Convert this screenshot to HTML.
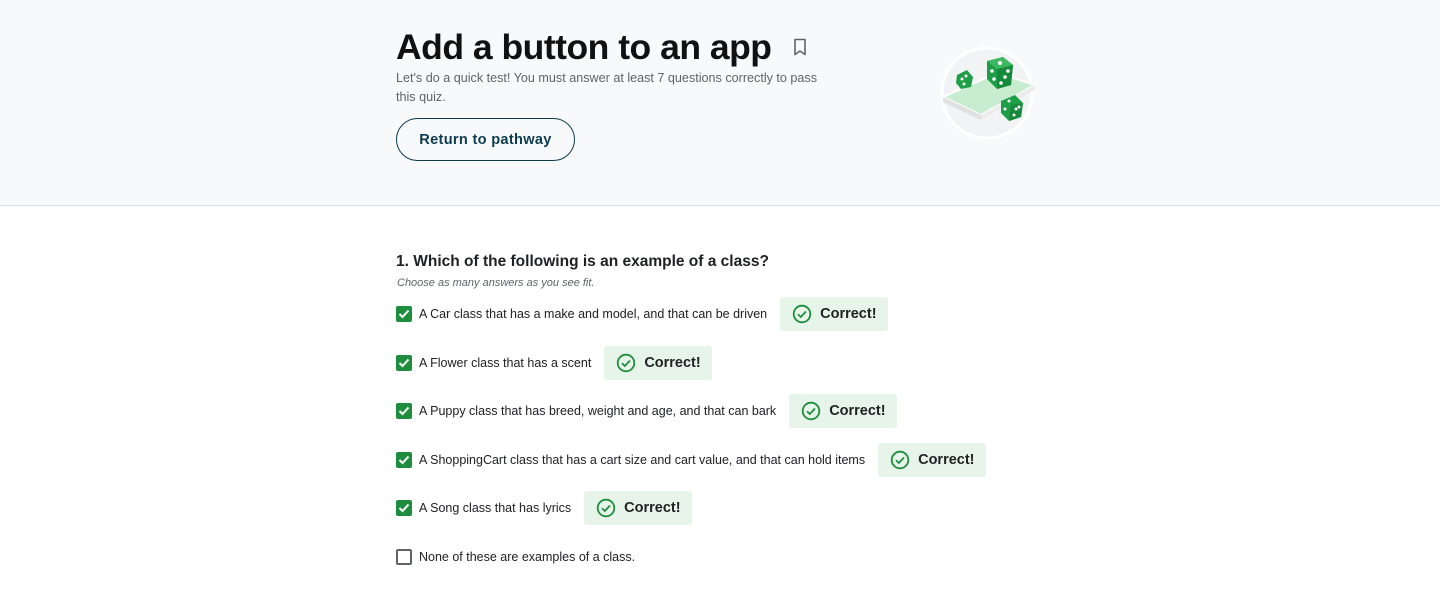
<!DOCTYPE html>
<html><head><meta charset="utf-8">
<style>
*{margin:0;padding:0;box-sizing:border-box}
body{width:1440px;height:594px;overflow:hidden;background:#fff;font-family:"Liberation Sans",sans-serif;position:relative}
.hdr{position:absolute;left:0;top:0;width:1440px;height:206px;background:#f8f9fa;border-bottom:1px solid #dadce0}
h1{position:absolute;left:396px;top:27px;font-size:35.5px;font-weight:700;color:#111;letter-spacing:-0.5px;white-space:nowrap}
.bm{position:absolute;left:793px;top:38px}
.sub{position:absolute;left:396px;top:69px;width:428px;font-size:12.6px;line-height:19px;color:#5f6368}
.btn{position:absolute;left:396px;top:118px;width:179px;height:43px;border:1.5px solid #0d3c4f;border-radius:22px;font-size:14.6px;font-weight:700;color:#0d3c4f;display:flex;align-items:center;justify-content:center;letter-spacing:0.3px}
.ill{position:absolute;left:935px;top:45px}
.q{position:absolute;left:396px;top:253px;font-size:15.5px;font-weight:700;color:#202124}
.hint{position:absolute;left:397px;top:277px;font-size:11px;font-style:italic;color:#5f6368}
.row{position:absolute;left:396px;height:34px;display:flex;align-items:center;font-size:12.5px;color:#202124;white-space:nowrap}
.cb{width:16px;height:16px;border-radius:2px;background:#1e8e3e;margin-right:7px;display:flex;align-items:center;justify-content:center}
.cb.off{background:#fff;border:2px solid #5f6368}
.badge{margin-left:13px;height:34px;background:#e6f4ea;border-radius:3px;display:flex;align-items:center;padding:0 11px 0 12px;font-size:14.5px;font-weight:700;color:#202124}
.badge svg{margin-right:8px}
</style></head><body>
<div class="hdr"></div>
<h1>Add a button to an app</h1>
<svg class="bm" width="14" height="18" viewBox="0 0 14 18"><path d="M2 1.5h10v15l-5-3.5-5 3.5z" fill="none" stroke="#5f6368" stroke-width="1.6" stroke-linejoin="round"/></svg>
<div class="sub">Let's do a quick test! You must answer at least 7 questions correctly to pass this quiz.</div>
<div class="btn">Return to pathway</div>
<svg class="ill" width="106" height="95" viewBox="0 0 106 95">
<circle cx="52" cy="48" r="45" fill="#f1f3f4" stroke="#fff" stroke-width="3"/>
<path d="M8 52 L62 28 L100 40 L46 70 Z" fill="#c8ecd0" stroke="#fff" stroke-width="2"/>
<path d="M8 52 L46 70 L46 75 L8 57 Z" fill="#e0e0e0"/>
<path d="M46 70 L100 40 L100 45 L46 75 Z" fill="#ececec"/>
<path d="M52 16 L68 12 L78 20 L76 40 L62 44 L52 34 Z" fill="#1e9e46"/>
<path d="M52 16 L68 12 L78 20 L62 24 Z" fill="#3dba5f"/>
<path d="M62 24 L78 20 L76 40 L62 44 Z" fill="#168a3b"/>
<circle cx="65" cy="18" r="2" fill="#fff"/><circle cx="57" cy="26" r="1.8" fill="#fff"/><circle cx="59" cy="34" r="1.8" fill="#fff"/><circle cx="70" cy="32" r="1.8" fill="#fff"/><circle cx="73" cy="26" r="1.8" fill="#fff"/><circle cx="66" cy="38" r="1.8" fill="#fff"/>
<path d="M22 30 L32 25 L38 32 L36 42 L26 44 L21 38 Z" fill="#1e9e46"/>
<circle cx="27" cy="34" r="1.5" fill="#fff"/><circle cx="31" cy="31" r="1.5" fill="#fff"/><circle cx="29" cy="39" r="1.5" fill="#fff"/>
<path d="M66 56 L80 50 L88 58 L86 72 L74 76 L66 68 Z" fill="#1e9e46"/>
<path d="M76 60 L88 58 L86 72 L74 76Z" fill="#168a3b"/>
<circle cx="74" cy="56" r="1.5" fill="#fff"/><circle cx="70" cy="64" r="1.5" fill="#fff"/><circle cx="81" cy="64" r="1.5" fill="#fff"/><circle cx="79" cy="70" r="1.5" fill="#fff"/><circle cx="84" cy="62" r="1.5" fill="#fff"/>
</svg>
<div class="q">1. Which of the following is an example of a class?</div>
<div class="hint">Choose as many answers as you see fit.</div>

<div class="row" style="top:297px"><div class="cb"><svg width="12" height="10" viewBox="0 0 12 10"><path d="M1.5 5l3 3 6-6.5" fill="none" stroke="#fff" stroke-width="2"/></svg></div>A Car class that has a make and model, and that can be driven<div class="badge"><svg width="20" height="20" viewBox="0 0 20 20"><circle cx="10" cy="10" r="8.3" fill="none" stroke="#1e8e3e" stroke-width="1.8"/><path d="M6 10.2l2.8 2.8 5.2-5.5" fill="none" stroke="#1e8e3e" stroke-width="1.8"/></svg>Correct!</div></div>
<div class="row" style="top:346px"><div class="cb"><svg width="12" height="10" viewBox="0 0 12 10"><path d="M1.5 5l3 3 6-6.5" fill="none" stroke="#fff" stroke-width="2"/></svg></div>A Flower class that has a scent<div class="badge"><svg width="20" height="20" viewBox="0 0 20 20"><circle cx="10" cy="10" r="8.3" fill="none" stroke="#1e8e3e" stroke-width="1.8"/><path d="M6 10.2l2.8 2.8 5.2-5.5" fill="none" stroke="#1e8e3e" stroke-width="1.8"/></svg>Correct!</div></div>
<div class="row" style="top:394px"><div class="cb"><svg width="12" height="10" viewBox="0 0 12 10"><path d="M1.5 5l3 3 6-6.5" fill="none" stroke="#fff" stroke-width="2"/></svg></div>A Puppy class that has breed, weight and age, and that can bark<div class="badge"><svg width="20" height="20" viewBox="0 0 20 20"><circle cx="10" cy="10" r="8.3" fill="none" stroke="#1e8e3e" stroke-width="1.8"/><path d="M6 10.2l2.8 2.8 5.2-5.5" fill="none" stroke="#1e8e3e" stroke-width="1.8"/></svg>Correct!</div></div>
<div class="row" style="top:443px"><div class="cb"><svg width="12" height="10" viewBox="0 0 12 10"><path d="M1.5 5l3 3 6-6.5" fill="none" stroke="#fff" stroke-width="2"/></svg></div>A ShoppingCart class that has a cart size and cart value, and that can hold items<div class="badge"><svg width="20" height="20" viewBox="0 0 20 20"><circle cx="10" cy="10" r="8.3" fill="none" stroke="#1e8e3e" stroke-width="1.8"/><path d="M6 10.2l2.8 2.8 5.2-5.5" fill="none" stroke="#1e8e3e" stroke-width="1.8"/></svg>Correct!</div></div>
<div class="row" style="top:491px"><div class="cb"><svg width="12" height="10" viewBox="0 0 12 10"><path d="M1.5 5l3 3 6-6.5" fill="none" stroke="#fff" stroke-width="2"/></svg></div>A Song class that has lyrics<div class="badge"><svg width="20" height="20" viewBox="0 0 20 20"><circle cx="10" cy="10" r="8.3" fill="none" stroke="#1e8e3e" stroke-width="1.8"/><path d="M6 10.2l2.8 2.8 5.2-5.5" fill="none" stroke="#1e8e3e" stroke-width="1.8"/></svg>Correct!</div></div>
<div class="row" style="top:540px"><div class="cb off"></div>None of these are examples of a class.</div>
</body></html>
